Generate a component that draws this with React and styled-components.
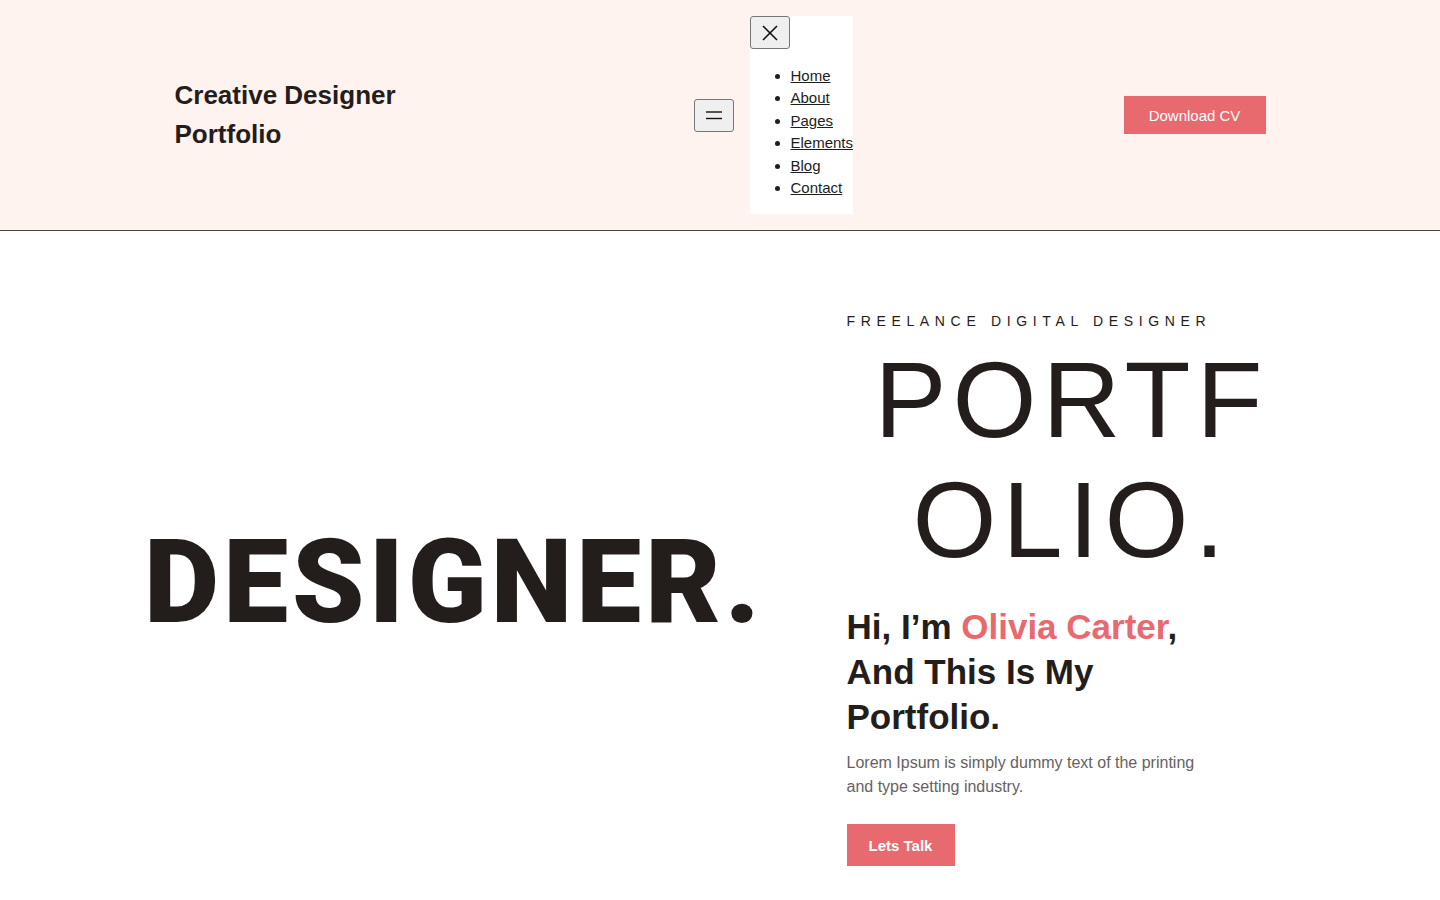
import React from "react";
import styled, { createGlobalStyle } from "styled-components";

const GlobalStyle = createGlobalStyle`
    body {
        margin: 0;
        font-family: "Liberation Sans", Arial, sans-serif;
        color: #231d1c;
        background: #ffffff;
    }
`;

// ---------- header ----------
export const ScHeader = styled.header`
    background: #fff3ef;
    border-bottom: 1px solid #4a4242;
`;

export const ScHeaderInner = styled.div`
    width: 1091px;
    margin: 0 auto;
    padding: 16px 0 16px;
    display: flex;
    align-items: center;
    justify-content: space-between;
`;

export const ScLogo = styled.div`
    width: 248px;
    font-size: 26px;
    font-weight: 700;
    line-height: 39px;
    color: #231d1c;
`;

export const ScNavGroup = styled.div`
    display: flex;
    align-items: center;
    gap: 16px;
`;

export const ScIconButton = styled.button`
    width: 40px;
    height: 33px;
    padding: 0;
    display: flex;
    align-items: center;
    justify-content: center;
    background: #efefef;
    border: 1px solid #767676;
    border-radius: 3px;
    color: #111;
    cursor: pointer;
`;

export const ScNavPanel = styled.nav`
    background: #ffffff;
    width: 103px;
    align-self: flex-start;

    ul {
        margin: 15px 0 15px;
        padding: 1px 0 0 41px;
        font-size: 15px;
        line-height: 22.4px;
    }

    li::marker {
        color: #231d1c;
    }

    a {
        color: #231d1c;
        text-decoration: underline;
    }
`;

export const ScButton = styled.a`
    display: inline-flex;
    align-items: center;
    justify-content: center;
    width: ${({ wide }) => (wide ? "142px" : "108px")};
    height: ${({ wide }) => (wide ? "38px" : "42px")};
    background: #e8696e;
    color: #ffffff;
    font-size: 15px;
    font-weight: ${({ bold }) => (bold ? 700 : 400)};
    text-decoration: none;
    cursor: pointer;
`;

// ---------- hero ----------
export const ScHero = styled.section`
    width: 1091px;
    margin: 0 auto;
    padding: 80px 0 34px;
    display: grid;
    grid-template-columns: 552px 370px;
    column-gap: 120px;
`;

export const ScHeroLeft = styled.div`
    display: flex;
    align-items: center;
    justify-content: center;
    padding: 0 0 14px 7px;
`;

export const ScBigWord = styled.h2`
    margin: 0;
    font-family: Roboto, "Liberation Sans", sans-serif;
    font-size: 116px;
    font-weight: 900;
    letter-spacing: 4px;
    line-height: 1;
    white-space: nowrap;
    color: #231d1c;
`;

export const ScHeroRight = styled.div`
    display: flex;
    flex-direction: column;
    align-items: flex-start;
`;

export const ScEyebrow = styled.p`
    margin: 0;
    font-size: 14px;
    line-height: 21px;
    letter-spacing: 5.65px;
    text-transform: uppercase;
    white-space: nowrap;
    color: #231d1c;
`;

export const ScOutlineTitle = styled.div`
    width: 450px;
    margin: 8px 0 0;
    font-size: 108px;
    font-weight: 400;
    line-height: 120px;
    letter-spacing: 6px;
    text-align: center;
    color: #231d1c;
`;

export const ScGreeting = styled.h1`
    margin: 24px 0 0;
    font-size: 35px;
    line-height: 45px;
    font-weight: 700;
    color: #231d1c;

    span {
        color: #e8696e;
    }
`;

export const ScLead = styled.p`
    margin: 12px 0 25px;
    font-size: 16px;
    line-height: 24px;
    color: #666262;
`;

const navItems = ["Home", "About", "Pages", "Elements", "Blog", "Contact"];

const MenuIcon = () => (
    <svg width="18" height="12" viewBox="0 0 18 12" fill="none" stroke="#111" strokeWidth="1.4">
        <line x1="1" y1="3" x2="17" y2="3" />
        <line x1="1" y1="9.5" x2="17" y2="9.5" />
    </svg>
);

const CloseIcon = () => (
    <svg width="18" height="18" viewBox="0 0 18 18" fill="none" stroke="#111" strokeWidth="1.6">
        <line x1="2" y1="2" x2="16" y2="16" />
        <line x1="16" y1="2" x2="2" y2="16" />
    </svg>
);

export default function App() {
    return (
        <>
            <GlobalStyle />
            <ScHeader>
                <ScHeaderInner>
                    <ScLogo>Creative Designer Portfolio</ScLogo>
                    <ScNavGroup>
                        <ScIconButton aria-label="Open menu">
                            <MenuIcon />
                        </ScIconButton>
                        <ScNavPanel>
                            <ScIconButton aria-label="Close menu">
                                <CloseIcon />
                            </ScIconButton>
                            <ul>
                                {navItems.map(item => (
                                    <li key={item}>
                                        <a href="#">{item}</a>
                                    </li>
                                ))}
                            </ul>
                        </ScNavPanel>
                    </ScNavGroup>
                    <ScButton wide>Download CV</ScButton>
                </ScHeaderInner>
            </ScHeader>

            <ScHero>
                <ScHeroLeft>
                    <ScBigWord>DESIGNER.</ScBigWord>
                </ScHeroLeft>
                <ScHeroRight>
                    <ScEyebrow>Freelance Digital Designer</ScEyebrow>
                    <ScOutlineTitle>
                        PORTF
                        <br />
                        OLIO.
                    </ScOutlineTitle>
                    <ScGreeting>
                        Hi, I’m <span>Olivia Carter</span>, And This Is My Portfolio.
                    </ScGreeting>
                    <ScLead>
                        Lorem Ipsum is simply dummy text of the printing and type setting
                        industry.
                    </ScLead>
                    <ScButton bold>Lets Talk</ScButton>
                </ScHeroRight>
            </ScHero>
        </>
    );
}
